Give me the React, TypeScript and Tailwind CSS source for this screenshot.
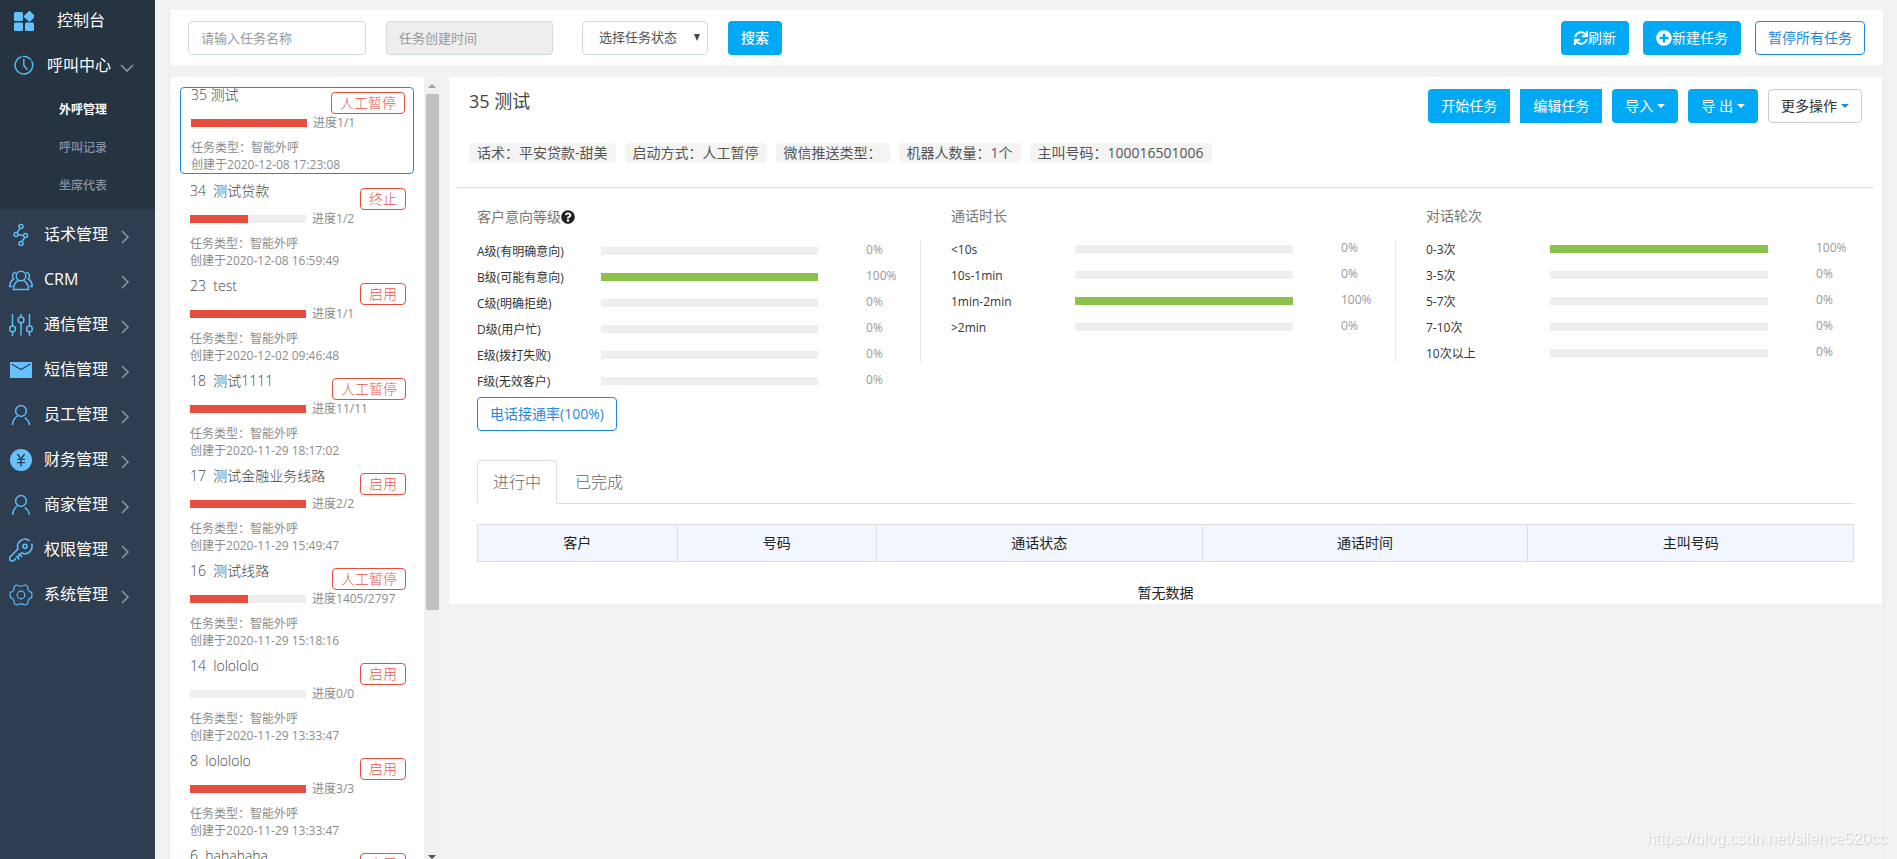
import React from 'react';
import { FaPlusCircle, FaQuestionCircle, FaSync } from 'react-icons/fa';

// --- Data ---
const menu = ['话术管理', 'CRM', '通信管理', '短信管理', '员工管理', '财务管理', '商家管理', '权限管理', '系统管理'];

const tasks = [
  { id: '35', name: '测试', status: '人工暂停', done: '1/1', percent: 100, time: '2020-12-08 17:23:08' },
  { id: '34', name: '测试贷款', status: '终止', done: '1/2', percent: 50, time: '2020-12-08 16:59:49' },
  { id: '23', name: 'test', status: '启用', done: '1/1', percent: 100, time: '2020-12-02 09:46:48' },
  { id: '18', name: '测试1111', status: '人工暂停', done: '11/11', percent: 100, time: '2020-11-29 18:17:02' },
  { id: '17', name: '测试金融业务线路', status: '启用', done: '2/2', percent: 100, time: '2020-11-29 15:49:47' },
  { id: '16', name: '测试线路', status: '人工暂停', done: '1405/2797', percent: 50, time: '2020-11-29 15:18:16' },
  { id: '14', name: 'lolololo', status: '启用', done: '0/0', percent: 0, time: '2020-11-29 13:33:47' },
  { id: '8', name: 'lolololo', status: '启用', done: '3/3', percent: 100, time: '2020-11-29 13:33:47' },
  { id: '6', name: 'hahahaha', status: '启用', done: '1/1', percent: 100, time: '2020-11-29 13:33:47' },
];

const tags = ['话术：平安贷款-甜美', '启动方式：人工暂停', '微信推送类型：', '机器人数量：1个', '主叫号码：100016501006'];

type Row = [string, number];

const levels: Row[] = [
  ['A级(有明确意向)', 0],
  ['B级(可能有意向)', 100],
  ['C级(明确拒绝)', 0],
  ['D级(用户忙)', 0],
  ['E级(拨打失败)', 0],
  ['F级(无效客户)', 0],
];

const durations: Row[] = [
  ['<10s', 0],
  ['10s-1min', 0],
  ['1min-2min', 100],
  ['>2min', 0],
];

const rounds: Row[] = [
  ['0-3次', 100],
  ['3-5次', 0],
  ['5-7次', 0],
  ['7-10次', 0],
  ['10次以上', 0],
];

// --- Icons ---
const DashboardIcon = () => (
  <svg viewBox="0 0 20 20" className="w-5 h-5" fill="#66c2ff">
    <rect x="0" y="1" width="9" height="9" rx="1.5" />
    <rect x="0" y="11.4" width="9" height="8.6" rx="1.5" />
    <rect x="11" y="11.4" width="9" height="8.6" rx="1.5" />
    <rect x="11.2" y="1.2" width="8.4" height="8.4" rx="1.4" transform="rotate(45 15.4 5.4)" />
  </svg>
);

const ClockIcon = () => (
  <svg viewBox="0 0 20 20" className="w-5 h-5" fill="none" stroke="#55b8f5" strokeWidth="1.5">
    <path d="M7.4 1.8 A8.8 8.8 0 1 0 17.6 6" />
    <path d="M8.6 1.5 A8.8 8.8 0 0 1 17 5" />
    <path d="M9.8 4.5 V10.2 L13 14.2" strokeLinecap="round" />
  </svg>
);

const userGlyph = (
  <>
    <circle cx="12" cy="8" r="5.4" />
    <path d="M3.5 22 C3.7 17.5 5.6 15 8.3 13 M15.7 14.6 C18.6 16.5 20.2 18.8 20.5 22" />
  </>
);

const glyphs: React.ReactNode[] = [
  <>
    <circle cx="12" cy="3.6" r="2" />
    <circle cx="7" cy="11.6" r="2" />
    <circle cx="16.6" cy="12.6" r="2" />
    <circle cx="12" cy="20.6" r="2" />
    <path d="M11 5.4 L8 9.8 M9 11.8 L14.6 12.4 M15.8 14.5 L12.8 18.8" />
  </>,
  <>
    <circle cx="12" cy="8" r="4.8" />
    <path d="M9.4 12.4 C7.5 13.6 4.5 16 4.5 21.5 H19.5 C19.5 16 16.5 13.6 14.6 12.4" />
    <path d="M7 4.2 A4 4 0 0 0 4.6 11 C2 12.6 .8 15.5 .8 18.6 H3.4 M17 4.2 A4 4 0 0 1 19.4 11 C22 12.6 23.2 15.5 23.2 18.6 H20.6" />
  </>,
  <>
    <path d="M3.5 1 V13 M3.5 19 V23 M12 1 V4 M12 10 V22.5 M20.5 1 V13 M20.5 19 V23" />
    <circle cx="3.5" cy="16" r="2.9" />
    <circle cx="12" cy="7" r="2.9" />
    <circle cx="20.5" cy="16" r="2.9" />
  </>,
  <>
    <path d="M1 4 H23 V20 H1 Z" fill="#66c2ff" stroke="none" />
    <path d="M2.5 6 L12 11.5 L21.5 6" stroke="#2e3d4f" strokeWidth="1.2" />
  </>,
  userGlyph,
  <>
    <circle cx="12" cy="12" r="11" fill="#66c2ff" stroke="none" />
    <path d="M8.4 6 L12 11 L15.6 6 M12 11 V18.6 M8 11.4 H16 M8 14.6 H16" stroke="#2e3d4f" strokeWidth="1.4" />
  </>,
  userGlyph,
  <g strokeWidth="1.6">
    <circle cx="16" cy="8.2" r="2" />
    <path d="M20.6 2.8 A7.4 7.4 0 0 0 9 11 L1.2 18.8 C.4 20 .6 21.6 1.6 22.6 C2.8 23.4 4 23.2 5 22.4 L7 20.4 M8.6 18.8 L12.8 15 C16 16.4 19.6 15.4 21.6 12.8 C23.2 10.6 23.5 8 22.6 5.6" />
    <path d="M7 18 L10.4 21.4 M9.6 15.6 L13 19" />
  </g>,
  <g strokeWidth="1.2">
    <circle cx="12" cy="12" r="3.8" />
    <path d="M8.6 2 C9.6 3.6 14.4 3.6 15.4 2 C16.8 2 18.4 3 19 4 C18.4 6.6 20 9 22.4 9.2 C23.2 11 23.2 13 22.4 14.8 C20 15 18.4 17.4 19 20 C18.4 21 16.8 22 15.4 22 C14.4 20.4 9.6 20.4 8.6 22 C7.2 22 5.6 21 5 20 C5.6 17.4 4 15 1.6 14.8 C.8 13 .8 11 1.6 9.2 C4 9 5.6 6.6 5 4 C5.6 3 7.2 2 8.6 2 Z" />
  </g>,
];

const Caret: React.FC<{ className?: string }> = ({ className = '' }) => (
  <svg viewBox="0 0 8 4" className={`w-2 h-1 ml-1 inline-block ${className}`} fill="currentColor">
    <path d="M0 0 H8 L4 4 Z" />
  </svg>
);

const Chevron: React.FC<{ down?: boolean }> = ({ down }) => (
  <svg viewBox="0 0 14 14" className="w-3.5 h-3.5" fill="none" stroke="#8a94a0" strokeWidth="1.6">
    <path d={down ? 'M1 4 L7 10 L13 4' : 'M4 1 L10 7 L4 13'} />
  </svg>
);

// --- Sidebar ---
const Sidebar: React.FC = () => (
  <nav className="w-[155px] shrink-0 bg-[#2e3d4f] text-white text-base overflow-hidden">
    <div className="bg-[#263442]">
      <a href="#" className="h-[42px] flex items-center pl-3.5">
        <DashboardIcon />
        <span className="ml-[23px] pb-0.5">控制台</span>
      </a>
      <a href="#" className="h-[45px] flex items-center pl-3.5">
        <ClockIcon />
        <span className="ml-[13px] w-[73px]">呼叫中心</span>
        <span className="pt-1.5"><Chevron down /></span>
      </a>
      <ul className="py-1 pl-[59px] text-xs font-medium text-[#8492a4]">
        <li className="h-[38px] flex items-center font-bold text-white"><a href="#">外呼管理</a></li>
        <li className="h-[38px] flex items-center"><a href="#">呼叫记录</a></li>
        <li className="h-[38px] flex items-center"><a href="#">坐席代表</a></li>
      </ul>
    </div>
    <div className="pt-[3px]">
      {menu.map((label, i) => (
        <a key={label} href="#" className="h-[45px] flex items-center pl-[9px]">
          <svg viewBox="0 0 24 24" className="w-6 h-6" fill="none" stroke="#5cbcf8" strokeWidth="1.5">
            {glyphs[i]}
          </svg>
          <span className="ml-[11px] w-[74px] pb-0.5">{label}</span>
          <span className="pt-1"><Chevron /></span>
        </a>
      ))}
    </div>
  </nav>
);

// --- Search bar ---
const Toolbar: React.FC = () => (
  <div className="h-[55px] shrink-0 bg-white flex items-center px-[18px]">
    <input
      aria-label="任务名称"
      placeholder="请输入任务名称"
      className="w-[178px] h-[34px] px-3 border border-[#cfdadd] rounded-sm text-[13px] placeholder:text-[#999]"
    />
    <input
      aria-label="任务创建时间"
      placeholder="任务创建时间"
      readOnly
      className="ml-5 w-[167px] h-[34px] px-3 border border-[#cfdadd] rounded-sm bg-[#eee] text-[13px] placeholder:text-[#999]"
    />
    <div className="relative ml-[29px]">
      <select aria-label="任务状态" className="appearance-none w-[126px] h-[34px] pl-4 border border-[#cfdadd] rounded-sm bg-white text-[13px] text-[#555]">
        <option>选择任务状态</option>
      </select>
      <svg viewBox="0 0 6 7" className="absolute right-2 top-[13px] w-1.5 h-[7px] pointer-events-none" fill="#444">
        <path d="M0 0 H6 L3 7 Z" />
      </svg>
    </div>
    <button className="ml-5 h-[34px] px-[13px] rounded bg-[#03a9f4] text-white text-sm font-medium">搜索</button>
    <div className="ml-auto flex gap-3.5 text-sm">
      <button className="h-[34px] px-[13px] rounded bg-[#03a9f4] text-white flex items-center">
        <FaSync className="w-3.5 h-3.5" />刷新
      </button>
      <button className="h-[34px] px-[13px] rounded bg-[#03a9f4] text-white flex items-center">
        <FaPlusCircle className="w-4 h-4" />新建任务
      </button>
      <button className="h-[34px] px-3 rounded border border-[#1e88e5] text-[#1e88e5]">暂停所有任务</button>
    </div>
  </div>
);

// --- Task list ---
const TaskList: React.FC = () => (
  <div className="flex shrink-0 overflow-hidden">
    <div className="w-[254px] bg-white rounded-t px-2.5 pt-2.5 overflow-y-auto [scrollbar-width:none]">
      {tasks.map((task, i) => (
        <div
          key={task.id}
          className={`mb-2.5 pl-2.5 pr-2 text-xs leading-[17px] text-[#8c8c8c] ${i === 0 ? 'border border-[#1e88e5] rounded-sm' : ''}`}
        >
          <div className="h-[26px] flex justify-between items-start text-sm font-light">
            <span className="leading-[14px] text-[#444] whitespace-pre">{task.id}{i === 0 ? ' ' : '  '}{task.name}</span>
            <span className="mt-1 h-[22px] px-2 border border-[#e74c3c] rounded-sm leading-5 text-[#ef5350]">{task.status}</span>
          </div>
          <div className="flex items-center h-[17px]">
            <div className="w-[116px] h-2 bg-[#eee]">
              <div className="h-2 bg-[#e84e40]" style={{ width: `${task.percent}%` }}></div>
            </div>
            <span className="ml-1.5">进度{task.done}</span>
          </div>
          <div className="mt-2">任务类型：智能外呼</div>
          <div>创建于{task.time}</div>
        </div>
      ))}
    </div>
    {/* Scroll track */}
    <div className="w-4 bg-[#f0f0f0] flex flex-col items-center">
      <svg viewBox="0 0 8 4" className="w-2 h-1 mt-[7px] mb-1.5 shrink-0" fill="#a3a3a3"><path d="M0 4 H8 L4 0 Z" /></svg>
      <div className="w-[13px] h-[66%] bg-[#c1c1c1]"></div>
      <svg viewBox="0 0 8 4" className="w-2 h-1 mt-auto shrink-0" fill="#505050"><path d="M0 0 H8 L4 4 Z" /></svg>
    </div>
  </div>
);

// --- Statistics ---
const Stats: React.FC<{ rows: Row[] }> = ({ rows }) => (
  <div className="-mt-1">
    {rows.map(([label, value]) => (
      <div key={label} className="h-[26px] flex items-center text-xs">
        <span className="w-[124px] text-[#333] whitespace-nowrap">{label}</span>
        <div className="flex-1 h-2 mb-0.5 bg-[#eee]">
          <div className="h-2 bg-[#8bc34a]" style={{ width: `${value}%` }}></div>
        </div>
        <span className="ml-12 w-[54px] pb-1 text-[#999]">{value}%</span>
      </div>
    ))}
  </div>
);

const Detail: React.FC = () => (
  <section className="ml-[9px] mr-px flex-1 min-w-0 self-start bg-white">
    <div className="flex items-start pt-3 px-5">
      <h1 className="text-lg leading-6 text-[#444]">35 测试</h1>
      <div className="ml-auto flex gap-2.5 text-sm text-white">
        <button className="h-[34px] px-[13px] rounded-l bg-[#03a9f4]">开始任务</button>
        <button className="h-[34px] px-[13px] bg-[#03a9f4]">编辑任务</button>
        <button className="h-[34px] px-[13px] rounded bg-[#03a9f4] flex items-center">导入<Caret /></button>
        <button className="h-[34px] px-[13px] rounded bg-[#03a9f4] flex items-center">导 出<Caret /></button>
        <button className="h-[34px] px-3 rounded border border-[#ccc] text-[#333] flex items-center">更多操作<Caret className="text-[#1e88e5]" /></button>
      </div>
    </div>
    <div className="mt-5 pl-5 flex gap-[9px] text-sm leading-5 text-[#555]">
      {tags.map((tag) => (
        <span key={tag} className="px-2 rounded-sm bg-[#f4f4f4]">{tag}</span>
      ))}
    </div>
    <hr className="mt-6 mx-2 border-[#ddd]" />

    <div className="grid grid-cols-[471fr_475fr_487fr] pt-[18px] text-sm text-[#777]">
      <div className="pl-7">
        <div className="h-[37px] leading-[22px] flex items-start">
          客户意向等级<FaQuestionCircle className="mt-1 w-3.5 h-3.5 text-[#222]" />
        </div>
        <Stats rows={levels} />
        <button className="mt-0.5 h-[34px] px-3 rounded border border-[#1e88e5] text-[#1e88e5]">电话接通率(100%)</button>
      </div>
      <div>
        <div className="h-[35px] leading-5 pl-[31px]">通话时长</div>
        <div className="flow-root h-[121px] pl-[30px] border-l border-[#e5e5e5]"><Stats rows={durations} /></div>
      </div>
      <div>
        <div className="h-[35px] leading-5 pl-[31px]">对话轮次</div>
        <div className="flow-root h-[121px] pl-[30px] pr-3 border-l border-[#e5e5e5]"><Stats rows={rounds} /></div>
      </div>
    </div>

    <div className="mt-[29px] mx-7">
      <div role="tablist" className="flex border-b border-[#ddd] text-base text-[#666]">
        <button role="tab" aria-selected="true" className="-mb-px h-11 px-[15px] border border-[#ddd] border-b-white rounded-t font-light">进行中</button>
        <button role="tab" aria-selected="false" className="px-[18px] font-light">已完成</button>
      </div>
      <table className="mt-5 w-full table-fixed border-collapse text-sm text-[#222]">
        <colgroup>
          <col className="w-[14.5%]" />
          <col className="w-[14.5%]" />
          <col />
          <col />
          <col />
        </colgroup>
        <thead>
          <tr className="h-[37px] bg-[#f2f6fe]">
            {['客户', '号码', '通话状态', '通话时间', '主叫号码'].map((head) => (
              <th key={head} className="border border-[#ddd] font-normal">{head}</th>
            ))}
          </tr>
        </thead>
      </table>
      <p className="pt-5 text-center text-sm leading-[22px] text-[#222]">暂无数据</p>
    </div>
  </section>
);

export default function App() {
  return (
    <div className="flex h-screen overflow-hidden bg-[#f2f2f2] font-['Open_Sans','Noto_Sans_CJK_SC',sans-serif]">
      <Sidebar />
      <main className="flex-1 min-w-0 mt-2.5 ml-3.5 mr-[13px] border-x border-[#ebebeb] flex flex-col">
        <Toolbar />
        <div className="mt-3 flex-1 min-h-0 flex">
          <TaskList />
          <Detail />
        </div>
      </main>
      {/* Watermark */}
      <div className="fixed right-2.5 bottom-2.5 font-['Liberation_Sans',sans-serif] text-base leading-5 text-white/80 [text-shadow:1px_1px_1px_#ccc] pointer-events-none">
        https://blog.csdn.net/silence520cc
      </div>
    </div>
  );
}
